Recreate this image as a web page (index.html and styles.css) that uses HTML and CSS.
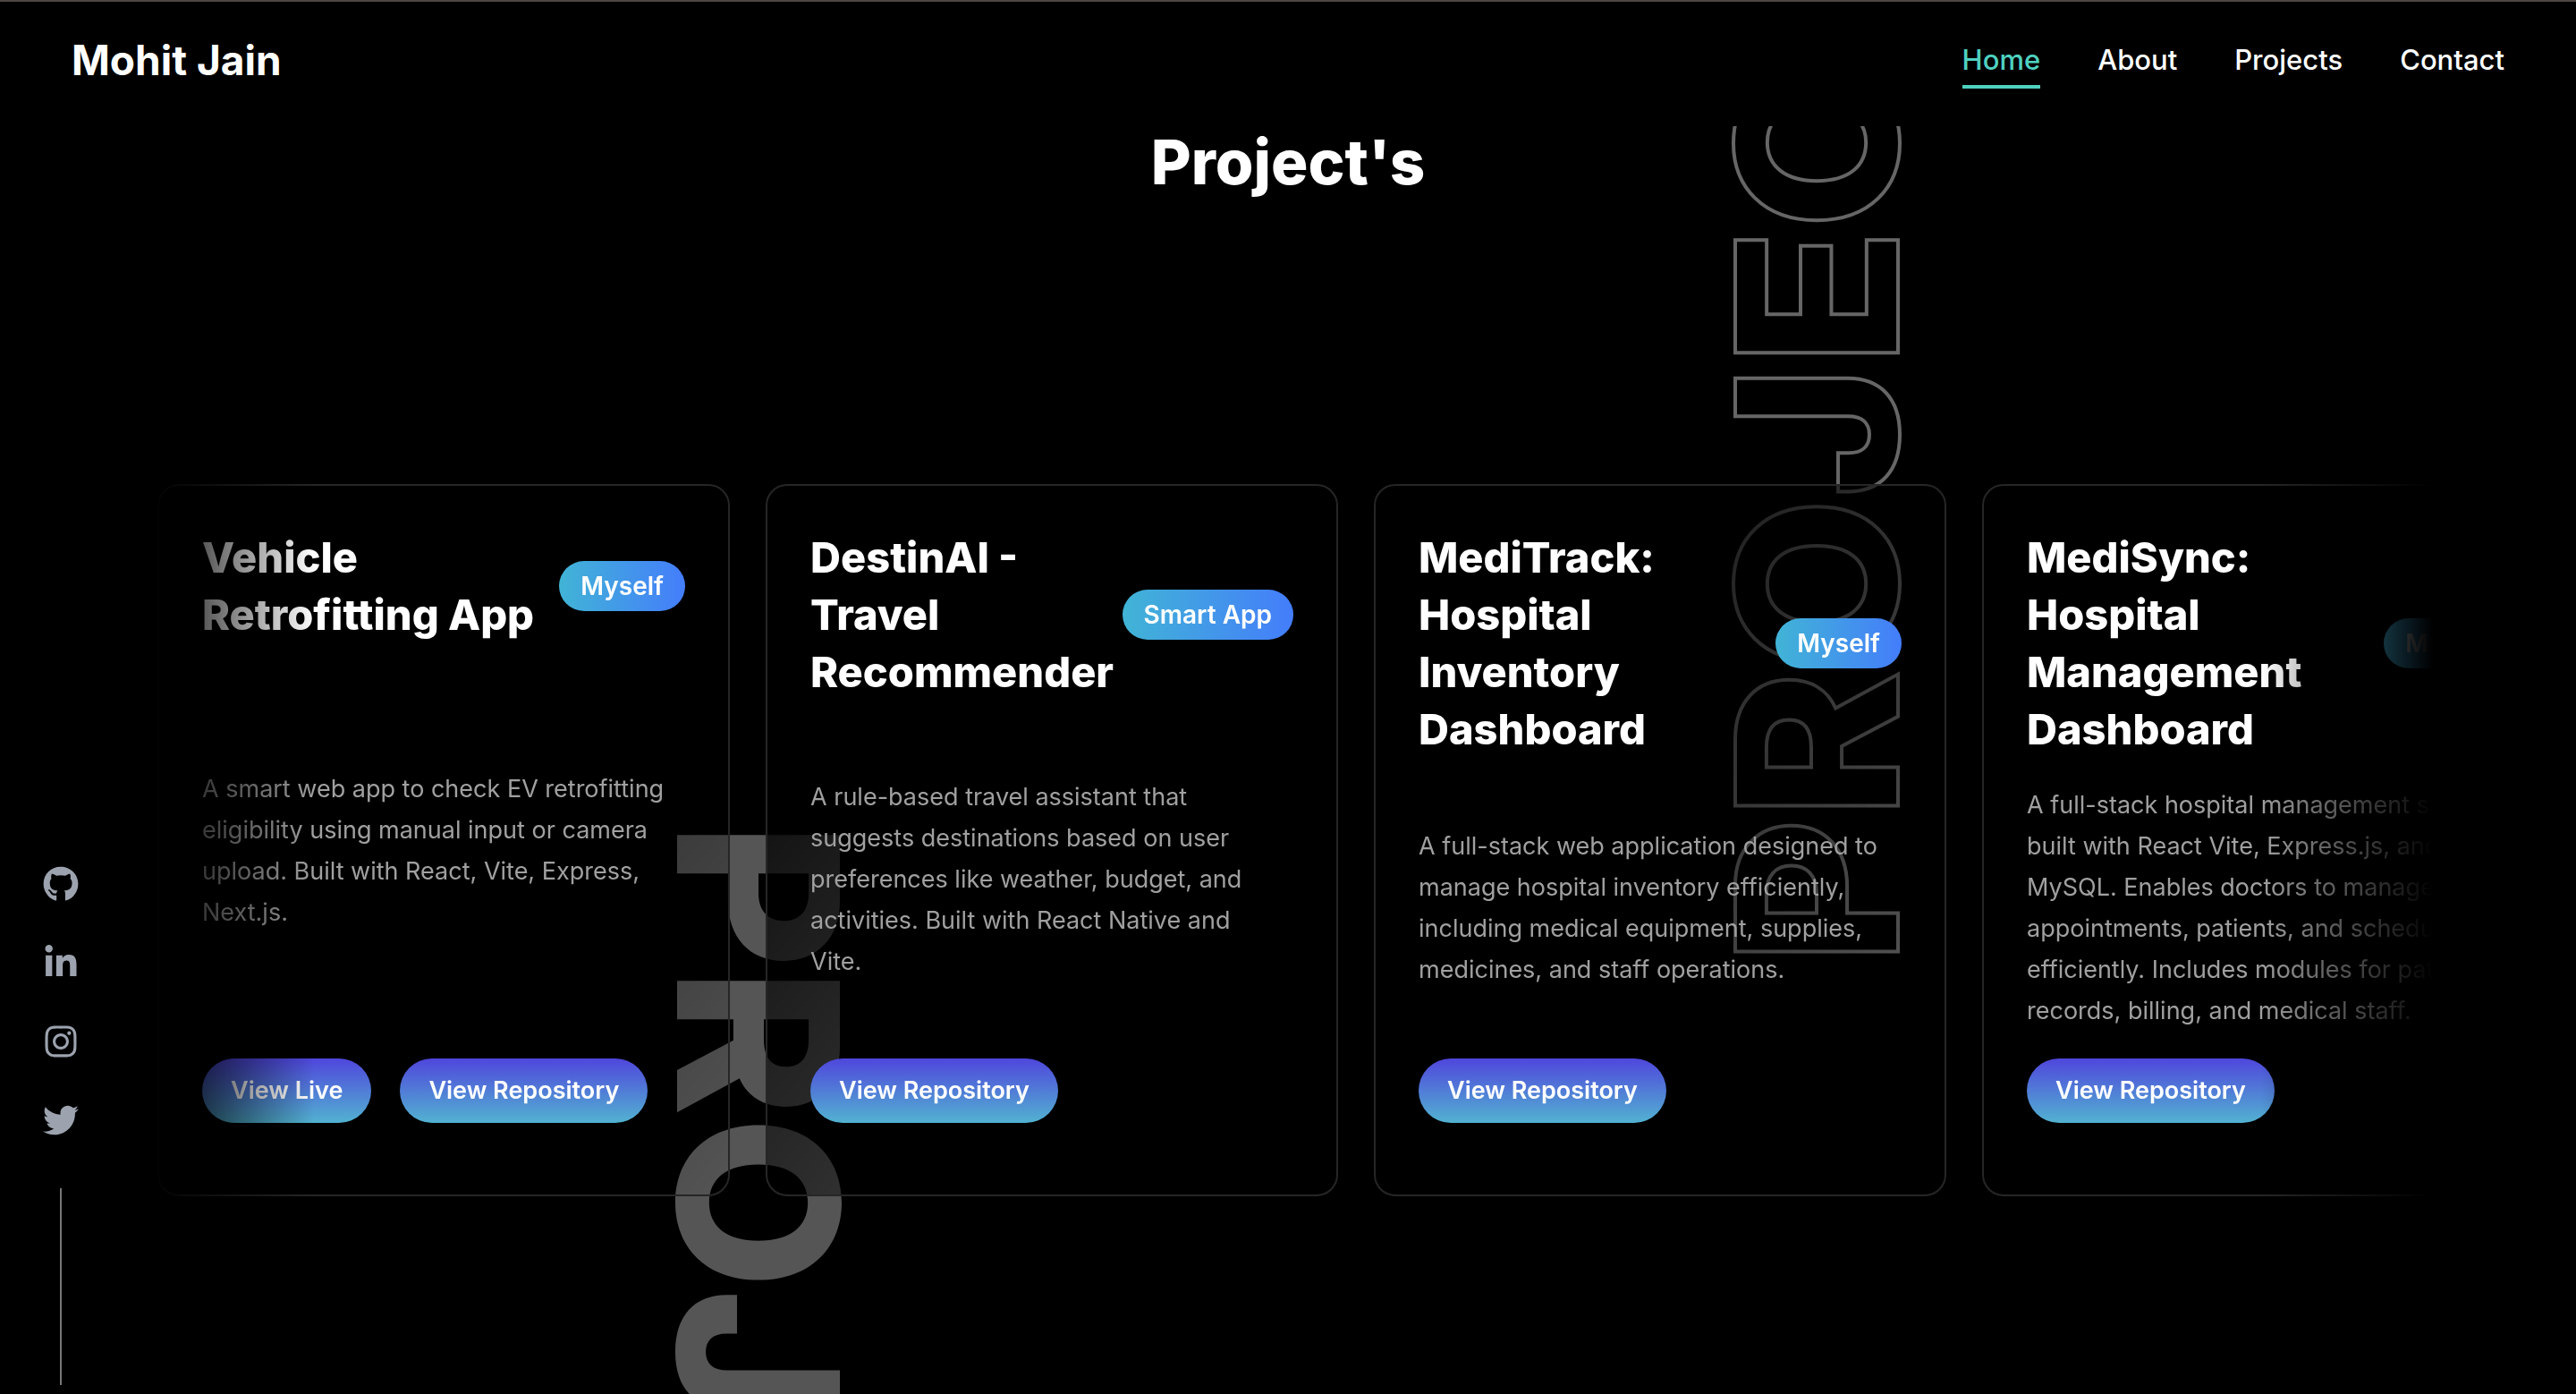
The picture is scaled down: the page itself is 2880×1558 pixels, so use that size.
FILE: index.html
```html
<!DOCTYPE html>
<html lang="en">
<head>
  <meta charset="utf-8">
  <title>Mohit Jain</title>
  <link rel="stylesheet" href="styles.css">
</head>
<body>
  <header class="navbar">
    <a class="brand" href="#home">Mohit Jain</a>
    <nav class="nav-links">
      <a class="nav-link active" href="#home">Home</a>
      <a class="nav-link" href="#about">About</a>
      <a class="nav-link" href="#projects">Projects</a>
      <a class="nav-link" href="#contact">Contact</a>
    </nav>
  </header>

  <aside class="social">
    <a class="social-link" href="#github" aria-label="GitHub"><svg class="icon" viewBox="0 0 496 512"><path d="M165.900 397.400c0 2-2.300 3.600-5.200 3.600-3.300.3-5.600-1.300-5.600-3.600 0-2 2.300-3.600 5.200-3.600 3-.3 5.600 1.300 5.600 3.600zm-31.100-4.500c-.7 2 1.300 4.300 4.300 4.900 2.600 1 5.600 0 6.200-2s-1.300-4.300-4.300-5.200c-2.600-.7-5.500.3-6.200 2.300zm44.200-1.700c-2.900.7-4.900 2.600-4.600 4.900.3 2 2.900 3.300 5.900 2.600 2.900-.7 4.900-2.600 4.600-4.600-.3-1.900-3-3.200-5.900-2.900zM244.800 8C106.100 8 0 113.300 0 252c0 110.900 69.800 205.800 169.500 239.200 12.800 2.300 17.300-5.600 17.300-12.100 0-6.200-.3-40.400-.3-61.400 0 0-70 15-84.700-29.800 0 0-11.400-29.100-27.800-36.600 0 0-22.900-15.700 1.600-15.400 0 0 24.900 2 38.600 25.800 21.900 38.600 58.600 27.500 72.900 20.900 2.300-16 8.800-27.100 16-33.700-55.900-6.200-112.300-14.300-112.300-110.500 0-27.500 7.600-41.300 23.600-58.900-2.600-6.500-11.100-33.300 2.600-67.900 20.900-6.500 69 27 69 27 20-5.600 41.500-8.500 62.800-8.500s42.800 2.900 62.800 8.500c0 0 48.100-33.600 69-27 13.700 34.700 5.200 61.400 2.600 67.900 16 17.700 25.800 31.500 25.800 58.900 0 96.500-58.900 104.200-114.800 110.500 9.200 7.900 17 22.900 17 46.400 0 33.700-.3 75.400-.3 83.600 0 6.500 4.600 14.400 17.300 12.100C428.200 457.800 496 362.900 496 252 496 113.300 383.500 8 244.800 8z"/></svg></a>
    <a class="social-link" href="#linkedin" aria-label="LinkedIn"><svg class="icon" viewBox="0 0 448 512"><path d="M100.280 448H7.400V148.900h92.880zM53.790 108.100C24.090 108.100 0 83.500 0 53.800a53.790 53.790 0 0 1 107.580 0c0 29.700-24.100 54.300-53.790 54.300zM447.900 448h-92.680V302.400c0-34.700-.7-79.200-48.290-79.200-48.290 0-55.690 37.700-55.690 76.700V448h-92.780V148.900h89.080v40.800h1.300c12.400-23.500 42.690-48.300 87.880-48.300 94 0 111.280 61.900 111.280 142.300V448z"/></svg></a>
    <a class="social-link" href="#instagram" aria-label="Instagram"><svg class="icon" viewBox="0 0 448 512"><path d="M224.100 141c-63.600 0-114.900 51.300-114.900 114.900s51.300 114.900 114.900 114.900S339 319.500 339 255.900 287.700 141 224.100 141zm0 189.600c-41.100 0-74.700-33.500-74.700-74.700s33.500-74.700 74.700-74.700 74.700 33.500 74.700 74.700-33.600 74.700-74.700 74.700zm146.400-194.300c0 14.900-12 26.800-26.800 26.800-14.900 0-26.800-12-26.800-26.800s12-26.800 26.800-26.800 26.800 12 26.800 26.800zm76.100 27.200c-1.700-35.900-9.900-67.700-36.200-93.900-26.200-26.200-58-34.400-93.900-36.200-37-2.100-147.900-2.100-184.900 0-35.800 1.700-67.600 9.900-93.900 36.100s-34.400 58-36.200 93.900c-2.100 37-2.100 147.900 0 184.900 1.700 35.900 9.900 67.700 36.200 93.900s58 34.400 93.900 36.200c37 2.100 147.900 2.100 184.900 0 35.900-1.700 67.700-9.900 93.900-36.200 26.200-26.200 34.400-58 36.200-93.900 2.100-37 2.100-147.800 0-184.800zM398.800 388c-7.800 19.600-22.900 34.700-42.600 42.600-29.500 11.700-99.500 9-132.100 9s-102.700 2.600-132.100-9c-19.600-7.800-34.700-22.900-42.600-42.600-11.700-29.500-9-99.500-9-132.100s-2.600-102.700 9-132.100c7.800-19.600 22.900-34.700 42.600-42.600 29.500-11.700 99.500-9 132.100-9s102.700-2.600 132.100 9c19.600 7.800 34.700 22.900 42.600 42.600 11.700 29.500 9 99.500 9 132.100s2.700 102.700-9 132.100z"/></svg></a>
    <a class="social-link" href="#twitter" aria-label="Twitter"><svg class="icon" viewBox="0 0 512 512"><path d="M459.370 151.716c.325 4.548.325 9.097.325 13.645 0 138.720-105.583 298.558-298.558 298.558-59.452 0-114.680-17.219-161.137-47.106 8.447.974 16.568 1.299 25.340 1.299 49.055 0 94.213-16.568 130.274-44.832-46.132-.975-84.792-31.188-98.112-72.772 6.498.974 12.995 1.624 19.818 1.624 9.421 0 18.843-1.300 27.614-3.573-48.081-9.747-84.143-51.980-84.143-102.985v-1.299c13.969 7.797 30.214 12.670 47.431 13.319-28.264-18.843-46.781-51.005-46.781-87.391 0-19.492 5.197-37.360 14.294-52.954 51.655 63.675 129.300 105.258 216.365 109.807-1.624-7.797-2.599-15.918-2.599-24.040 0-57.828 46.782-104.934 104.934-104.934 30.213 0 57.502 12.670 76.670 33.137 23.715-4.548 46.456-13.320 66.599-25.340-7.798 24.366-24.366 44.833-46.132 57.827 21.117-2.273 41.584-8.122 60.426-16.243-14.292 20.791-32.161 39.308-52.628 54.253z"/></svg></a>
    <span class="social-line"></span>
  </aside>

  <main class="projects">
    <div class="backdrop backdrop-outline" aria-hidden="true">PROJECTS</div>
    <div class="backdrop backdrop-solid" aria-hidden="true">PROJECTS</div>
    <h1 class="page-title">Project's</h1>

    <div class="carousel">
      <article class="card">
        <div class="card-head"><h2 class="card-title">Vehicle Retrofitting App</h2><span class="badge">Myself</span></div>
        <p class="card-text">A smart web app to check EV retrofitting eligibility using manual input or camera upload. Built with React, Vite, Express, Next.js.</p>
        <div class="card-actions"><button class="btn" type="button">View Live</button><button class="btn" type="button">View Repository</button></div>
      </article>
      <article class="card">
        <div class="card-head"><h2 class="card-title">DestinAI - Travel Recommender</h2><span class="badge">Smart App</span></div>
        <p class="card-text">A rule-based travel assistant that suggests destinations based on user preferences like weather, budget, and activities. Built with React Native and<br>Vite.</p>
        <div class="card-actions"><button class="btn" type="button">View Repository</button></div>
      </article>
      <article class="card">
        <div class="card-head"><h2 class="card-title">MediTrack: Hospital Inventory Dashboard</h2><span class="badge">Myself</span></div>
        <p class="card-text">A full-stack web application designed to manage hospital inventory efficiently, including medical equipment, supplies, medicines, and staff operations.</p>
        <div class="card-actions"><button class="btn" type="button">View Repository</button></div>
      </article>
      <article class="card">
        <div class="card-head"><h2 class="card-title">MediSync: Hospital Management Dashboard</h2><span class="badge">Myself</span></div>
        <p class="card-text">A full-stack hospital management system built with React Vite, Express.js, and MySQL. Enables doctors to manage appointments, patients, and schedules efficiently. Includes modules for patient records, billing, and medical staff.</p>
        <div class="card-actions"><button class="btn" type="button">View Repository</button></div>
      </article>
    </div>
  </main>
</body>
</html>
```
FILE: styles.css
```css
* {
  box-sizing: border-box;
  margin: 0;
}

body {
  display: flex;
  flex-direction: column;
  height: 100vh;
  overflow: hidden;
  background: #000;
  color: #fff;
  font-family: Inter, "Liberation Sans", sans-serif;
}

a {
  color: inherit;
  text-decoration: none;
}

/* Top bar */
.navbar {
  display: flex;
  flex-shrink: 0;
  align-items: center;
  justify-content: space-between;
  padding: 33px 80px 42px;
  border-top: 2px solid #4f4545;
  background: #000;
}

.brand {
  font-size: 46px;
  font-weight: 700;
  line-height: 64px;
}

.nav-links {
  display: flex;
  gap: 64px;
}

.nav-link {
  padding: 8px 0 4px;
  border-bottom: 4px solid transparent;
  font-size: 31px;
  font-weight: 500;
  line-height: 48px;
}

.nav-link.active {
  border-color: #4fd1c0;
  color: #4fd1c0;
}

/* Social rail */
.social {
  position: fixed;
  bottom: 10px;
  left: 48px;
  z-index: 2;
  display: flex;
  flex-direction: column;
  align-items: center;
  gap: 48px;
  color: #9ca3af;
}

.social-link {
  display: block;
  height: 40px;
}

.icon {
  display: block;
  width: 40px;
  height: 40px;
  fill: currentColor;
}

.social-line {
  width: 2px;
  height: 220px;
  margin-top: 8px;
  background: #777;
}

/* Projects */
.projects {
  position: relative;
  flex: 1;
  min-height: 0;
  overflow: hidden;
}

.page-title {
  font-size: 69px;
  font-weight: 800;
  line-height: 80px;
  text-align: center;
}

.backdrop {
  position: absolute;
  font-size: 250px;
  font-weight: 800;
  line-height: 256px;
  white-space: nowrap;
  writing-mode: vertical-rl;
}

.backdrop-outline {
  bottom: 480px;
  left: 1903px;
  color: transparent;
  -webkit-text-stroke: 4px #666;
  transform: rotate(180deg);
}

.backdrop-solid {
  top: 778px;
  left: 720px;
  color: #555;
}

.carousel {
  position: relative;
  display: flex;
  gap: 40px;
  max-width: 2560px;
  margin: 320px auto 0;
  padding-left: 16px;
  overflow: hidden;
  -webkit-mask-image: linear-gradient(to right, transparent, #000 192px, #000 calc(100% - 192px), transparent);
  mask-image: linear-gradient(to right, transparent, #000 192px, #000 calc(100% - 192px), transparent);
}

.card {
  display: flex;
  flex: 0 0 640px;
  flex-direction: column;
  justify-content: space-between;
  gap: 30px;
  padding: 48px;
  border: 2px solid #262626;
  border-radius: 24px;
  background: linear-gradient(to bottom right, #000, transparent);
}

.card-head {
  display: flex;
  align-items: center;
  justify-content: space-between;
}

.card-title {
  font-size: 47px;
  font-weight: 800;
  line-height: 64px;
}

.badge {
  flex-shrink: 0;
  padding: 8px 24px;
  border-radius: 28px;
  background: linear-gradient(to right, #41b4d6, #447dfb);
  font-size: 28px;
  font-weight: 600;
  line-height: 40px;
}

.card-text {
  color: #a0a0a0;
  font-size: 27px;
  line-height: 46px;
}

.card-actions {
  display: flex;
  gap: 32px;
  margin-bottom: 32px;
}

.btn {
  padding: 16px 32px;
  border: 0;
  border-radius: 36px;
  background: linear-gradient(#4f46dc, #52b2d1);
  color: #fff;
  font: 600 27px/40px Inter, "Liberation Sans", sans-serif;
}
```
